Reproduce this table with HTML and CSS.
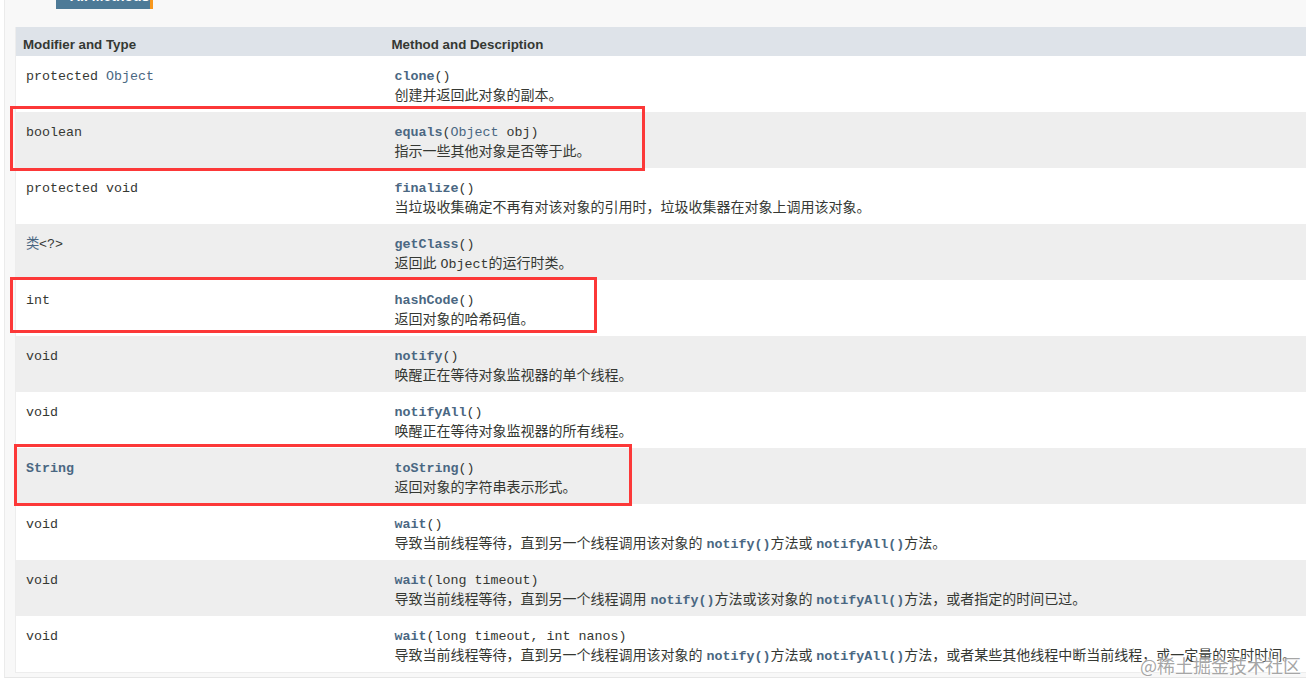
FILE: index.html
```html
<!DOCTYPE html>
<html lang="zh-CN">
<head>
  <meta charset="UTF-8">
  <title>Object - Method Summary</title>
  <link rel="stylesheet" href="styles.css">
</head>
<body>
  <div class="summary">
    <div class="caption"><span class="tab"><span class="tab-text">All Methods</span></span></div>
    <table class="member-summary">
      <colgroup>
        <col class="col-type">
        <col>
      </colgroup>
      <thead>
        <tr>
          <th>Modifier and Type</th>
          <th>Method and Description</th>
        </tr>
      </thead>
      <tbody>
        <tr class="row-white">
          <td><code>protected <a>Object</a></code></td>
          <td><code><a class="name">clone</a>()</code><div class="desc">创建并返回此对象的副本。</div></td>
        </tr>
        <tr class="row-gray">
          <td><code>boolean</code></td>
          <td><code><a class="name">equals</a>(<a>Object</a> obj)</code><div class="desc">指示一些其他对象是否等于此。</div></td>
        </tr>
        <tr class="row-white">
          <td><code>protected void</code></td>
          <td><code><a class="name">finalize</a>()</code><div class="desc">当垃圾收集确定不再有对该对象的引用时，垃圾收集器在对象上调用该对象。</div></td>
        </tr>
        <tr class="row-gray">
          <td><code><a>类</a>&lt;?&gt;</code></td>
          <td><code><a class="name">getClass</a>()</code><div class="desc">返回此 <code>Object</code>的运行时类。</div></td>
        </tr>
        <tr class="row-white">
          <td><code>int</code></td>
          <td><code><a class="name">hashCode</a>()</code><div class="desc">返回对象的哈希码值。</div></td>
        </tr>
        <tr class="row-gray">
          <td><code>void</code></td>
          <td><code><a class="name">notify</a>()</code><div class="desc">唤醒正在等待对象监视器的单个线程。</div></td>
        </tr>
        <tr class="row-white">
          <td><code>void</code></td>
          <td><code><a class="name">notifyAll</a>()</code><div class="desc">唤醒正在等待对象监视器的所有线程。</div></td>
        </tr>
        <tr class="row-gray">
          <td><code><a class="name">String</a></code></td>
          <td><code><a class="name">toString</a>()</code><div class="desc">返回对象的字符串表示形式。</div></td>
        </tr>
        <tr class="row-white">
          <td><code>void</code></td>
          <td><code><a class="name">wait</a>()</code><div class="desc">导致当前线程等待，直到另一个线程调用该对象的 <code class="ref">notify()</code>方法或 <code class="ref">notifyAll()</code>方法。</div></td>
        </tr>
        <tr class="row-gray">
          <td><code>void</code></td>
          <td><code><a class="name">wait</a>(long timeout)</code><div class="desc">导致当前线程等待，直到另一个线程调用 <code class="ref">notify()</code>方法或该对象的 <code class="ref">notifyAll()</code>方法，或者指定的时间已过。</div></td>
        </tr>
        <tr class="row-white">
          <td><code>void</code></td>
          <td><code><a class="name">wait</a>(long timeout, int nanos)</code><div class="desc">导致当前线程等待，直到另一个线程调用该对象的 <code class="ref">notify()</code>方法或 <code class="ref">notifyAll()</code>方法，或者某些其他线程中断当前线程，或一定量的实时时间。</div></td>
        </tr>
      </tbody>
    </table>
  </div>

  <!-- annotation boxes drawn over the screenshot -->
  <div class="mark mark-equals"></div>
  <div class="mark mark-hash"></div>
  <div class="mark mark-string"></div>

  <div class="watermark">@稀土掘金技术社区</div>
</body>
</html>
```

FILE: styles.css
```css
body {
  margin: 0;
  background-color: #fff;
  color: #353833;
  font-family: "Liberation Sans", "Noto Sans CJK SC", sans-serif;
  overflow: hidden;
  position: relative;
  height: 689px;
}

.summary {
  margin-left: 4px;
  width: 1340px;
  background-color: #f8f8f8;
  border-left: 1px solid #ebebeb;
  border-bottom: 1px solid #e6e6e6;
  padding: 0 0 4px 10px;
}

.caption {
  height: 9px;
  margin: 0 0 18px 41px;
}

.tab {
  display: inline-block;
  box-sizing: border-box;
  width: 97px;
  height: 9px;
  overflow: hidden;
  background-color: #4d7a97;
  border-right: 3px solid #f8981d;
  vertical-align: top;
}

.tab-text {
  display: block;
  margin-top: -12px;
  padding-left: 14px;
  color: #fff;
  font-weight: bold;
  font-size: 14px;
  line-height: 16px;
}

.member-summary {
  border-collapse: collapse;
  table-layout: fixed;
  width: 1320px;
  border-left: 1px solid #ededed;
  border-bottom: 1px solid #ededed;
}

.col-type {
  width: 369px;
}

.member-summary th {
  height: 29px;
  box-sizing: border-box;
  padding: 10px 3px 0 7px;
  background-color: #dee3e9;
  text-align: left;
  vertical-align: top;
  font-size: 13.33px;
  line-height: 16px;
  font-weight: bold;
  color: #353833;
}

.member-summary td {
  height: 56px;
  box-sizing: border-box;
  padding: 10px 3px 0 10px;
  vertical-align: top;
}

.row-white td {
  background-color: #fff;
}

.row-gray td {
  background-color: #eeeeee;
}

code {
  font-family: "Liberation Mono", monospace;
  font-size: 13.33px;
  line-height: 17px;
  color: #353833;
}

a {
  color: #4a6782;
}

a.name {
  font-weight: bold;
}

.desc {
  font-size: 14px;
  line-height: 20px;
  color: #353833;
  white-space: nowrap;
}

.desc code {
  line-height: 20px;
}

.desc .ref {
  color: #4a6782;
  font-weight: bold;
}

.mark {
  position: absolute;
  box-sizing: border-box;
  border: 3px solid #fc3838;
}

.mark-equals {
  left: 10px;
  top: 106px;
  width: 635px;
  height: 65px;
}

.mark-hash {
  left: 10px;
  top: 277px;
  width: 587px;
  height: 56px;
}

.mark-string {
  left: 14px;
  top: 444px;
  width: 618px;
  height: 62px;
}

.watermark {
  position: absolute;
  left: 1140px;
  top: 653px;
  white-space: nowrap;
  font-family: "Noto Sans CJK SC", sans-serif;
  font-size: 18px;
  line-height: 24px;
  color: rgba(150, 150, 150, 0.85);
  text-shadow: 0 0 2px #fff, 0 0 3px #fff;
}
```
